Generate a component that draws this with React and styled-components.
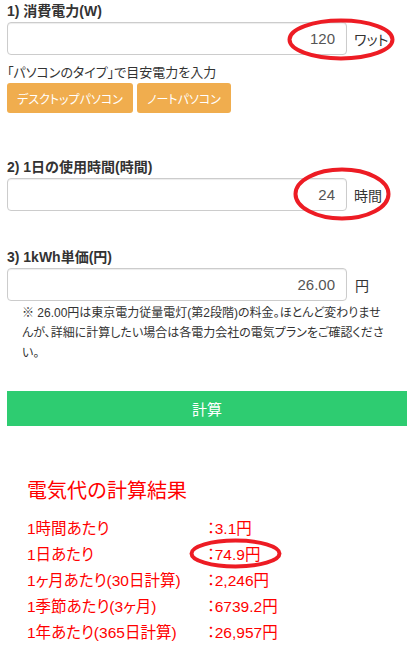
import React from "react";
import styled, { createGlobalStyle } from "styled-components";

const GlobalStyle = createGlobalStyle`
  body {
    margin: 0;
    background: #fff;
    font-family: "Liberation Sans", "Noto Sans CJK JP", sans-serif;
    color: #333;
  }
`;

const Page = styled.div`
  width: 400px;
  padding: 2px 7px 0;
`;

const Label = styled.div`
  font-size: 14px;
  font-weight: bold;
  line-height: 19px;
  margin: ${p => p.$top || 0}px 0 1px;
  color: #333;
`;

const InputRow = styled.div`
  position: relative;
  display: flex;
  align-items: center;
`;

const Input = styled.input`
  box-sizing: border-box;
  width: 340px;
  height: 33px;
  border: 1px solid #ccc;
  border-radius: 4px;
  box-shadow: inset 0 1px 1px rgba(0, 0, 0, 0.075);
  padding: 0 11px;
  text-align: right;
  font-family: "Liberation Sans", "Noto Sans CJK JP", sans-serif;
  font-size: 15px;
  color: #555;
  outline: none;
`;

const Unit = styled.span`
  margin-left: ${p => p.$gap || 7}px;
  font-size: 14px;
  color: #333;
  font-feature-settings: "palt";
`;

const Hint = styled.div`
  margin-top: 8px;
  font-size: 13px;
  line-height: 20px;
  font-feature-settings: "palt";
`;

const Buttons = styled.div`
  display: flex;
  gap: 4px;
`;

const TypeButton = styled.button`
  width: ${p => p.$w}px;
  height: 30px;
  margin: 0;
  padding: 0;
  border: none;
  border-radius: 3px;
  background: #f0ad4e;
  color: #fff;
  font-family: "Noto Sans CJK JP", sans-serif;
  font-size: 12px;
  font-feature-settings: "palt";
  white-space: nowrap;
  cursor: pointer;
`;

const Note = styled.p`
  margin: 2px 0 0;
  padding-left: 15px;
  font-size: 12px;
  line-height: 20px;
  color: #333;
  font-feature-settings: "palt";
`;

const CalcButton = styled.button`
  display: block;
  width: 400px;
  height: 35px;
  margin-top: 28px;
  border: none;
  background: #2ecc71;
  color: #fff;
  font-family: "Noto Sans CJK JP", sans-serif;
  font-size: 15px;
  cursor: pointer;
`;

const Result = styled.div`
  margin-top: 53px;
  padding-left: 20px;
  color: #f00;
`;

const ResultTitle = styled.h2`
  margin: 0 0 13px;
  font-size: 20px;
  font-weight: normal;
  line-height: 24px;
`;

const ResultRow = styled.div`
  position: relative;
  display: grid;
  grid-template-columns: 180px auto;
  font-size: 15.5px;
  line-height: 26px;
  font-feature-settings: "palt";
`;

const Mark = styled.svg`
  position: absolute;
  left: ${p => p.$x}px;
  top: ${p => p.$y}px;
  pointer-events: none;
`;

function Circle({ x, y, w, h }) {
  return (
    <Mark $x={x} $y={y} width={w} height={h} viewBox={`0 0 ${w} ${h}`}>
      <ellipse
        cx={w / 2}
        cy={h / 2}
        rx={w / 2 - 2.5}
        ry={h / 2 - 2.5}
        fill="none"
        stroke="#ed1c24"
        strokeWidth="4"
      />
    </Mark>
  );
}

const results = [
  ["1時間あたり", "：3.1円"],
  ["1日あたり", "：74.9円"],
  ["1ヶ月あたり(30日計算)", "：2,246円"],
  ["1季節あたり(3ヶ月)", "：6739.2円"],
  ["1年あたり(365日計算)", "：26,957円"]
];

export default function App() {
  return (
    <Page>
      <GlobalStyle />
      <Label>1) 消費電力(W)</Label>
      <InputRow>
        <Input defaultValue="120" />
        <Unit>ワット</Unit>
        <Circle x={280} y={-4} w={108} h={43} />
      </InputRow>
      <Hint>「パソコンのタイプ」で目安電力を入力</Hint>
      <Buttons>
        <TypeButton $w={126}>デスクトップパソコン</TypeButton>
        <TypeButton $w={94}>ノートパソコン</TypeButton>
      </Buttons>

      <Label $top={45}>2) 1日の使用時間(時間)</Label>
      <InputRow>
        <Input defaultValue="24" />
        <Unit>時間</Unit>
        <Circle x={286} y={-11} w={98} h={54} />
      </InputRow>

      <Label $top={37}>3) 1kWh単価(円)</Label>
      <InputRow>
        <Input defaultValue="26.00" />
        <Unit $gap={8}>円</Unit>
      </InputRow>
      <Note>
        ※ 26.00円は東京電力従量電灯(第2段階)の料金。ほとんど変わりませ
        <br />
        んが、詳細に計算したい場合は各電力会社の電気プランをご確認くださ
        <br />
        い。
      </Note>

      <CalcButton>計算</CalcButton>

      <Result>
        <ResultTitle>電気代の計算結果</ResultTitle>
        {results.map(([label, value], i) => (
          <ResultRow key={label}>
            <span>{label}</span>
            <span>{value}</span>
            {i === 1 && <Circle x={162} y={-4} w={93} h={31} />}
          </ResultRow>
        ))}
      </Result>
    </Page>
  );
}
